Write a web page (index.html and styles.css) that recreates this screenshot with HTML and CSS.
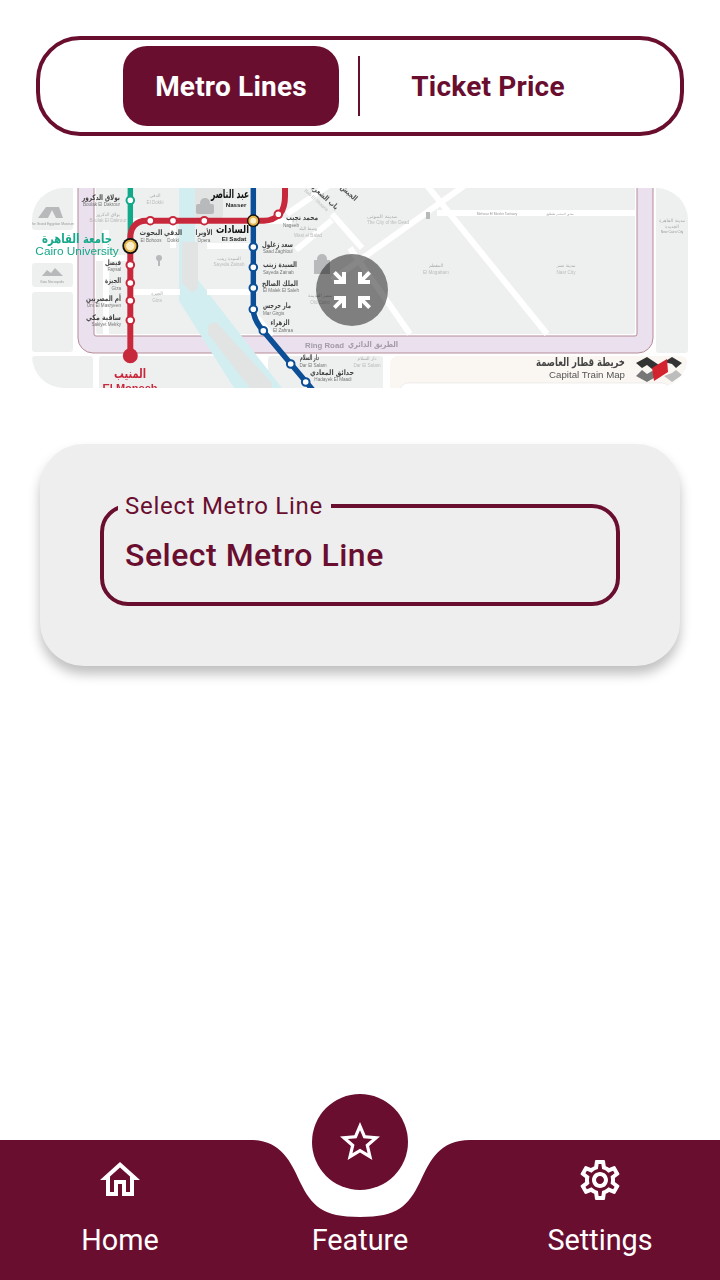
FILE: index.html
```html
<!DOCTYPE html>
<html lang="en">
<head>
<meta charset="utf-8">
<title>Metro Lines</title>
<link rel="stylesheet" href="styles.css">
</head>
<body>
<main class="screen">
  <div class="toggle">
    <div class="tab tab-active">Metro Lines</div>
    <div class="tab-divider"></div>
    <div class="tab tab-wide">Ticket Price</div>
  </div>

  <div class="map">
    <svg class="map-art" viewBox="0 0 656 200" width="656" height="200" xmlns="http://www.w3.org/2000/svg">
      <rect class="bg" width="656" height="200"/>
      <!-- outer blocks -->
      <g class="block">
        <rect x="0" y="-5" width="41" height="47" rx="3"/>
        <rect x="0" y="75" width="41" height="24" rx="3"/>
        <rect x="0" y="104" width="41" height="60" rx="3"/>
        <rect x="0" y="168" width="61" height="40" rx="3"/>
        <rect x="67" y="168" width="150" height="40" rx="3"/>
        <rect x="236" y="168" width="115" height="40" rx="3"/>
        <rect x="624" y="-5" width="32" height="170" rx="3"/>
      </g>
      <rect class="cream" x="358" y="168" width="298" height="40" rx="8"/>
      <rect class="cream-line" x="368" y="195" width="270" height="20" rx="8"/>
      <!-- ring road -->
      <path class="ring" d="M46 -10V150a15 15 0 0 0 15 15H606a15 15 0 0 0 15-15V-10Z"/>
      <rect class="ring-in" x="62" y="-10" width="543" height="158" rx="2"/>
      <rect class="inner" x="64" y="-10" width="539" height="156" rx="2"/>
      <!-- nile -->
      <polygon class="nile" points="147,-5 163,-5 163,88 250,200 202,200 147,113"/>
      <polygon class="island" points="150,54 166,54 166,100 160,105 150,95"/>
      <polygon class="island" points="176,137 184,134 240,195 240,205 222,205 176,146"/>
      <rect class="island" x="163" y="-5" width="28" height="38" rx="7"/>
      <!-- roads -->
      <g class="road">
        <path d="M98 -5V170"/>
        <path d="M100 33H260"/>
        <path d="M221 -5V125L240 148"/>
        <path d="M74 42V146"/>
        <path d="M64 70H96"/>
        <path d="M100 104H148"/>
        <path d="M175 104H222"/>
        <path d="M175 58H222"/>
        <path d="M141 33V60"/>
        <path d="M393 -5L515 146"/>
        <path d="M436 -5L300 92"/>
        <path d="M405 25H603"/>
        <path d="M318 60L378 146"/>
        <path d="M255 26L300 -5"/>
        <path d="M300 26L330 60"/>
        <path d="M264 62L300 32"/>
      </g>
      <!-- landmarks -->
      <polygon class="pyr" points="6,30 14,19 27,19 31,30 24,30 20,22 16,30"/>
      <polygon class="pyr" points="10,88 15,82 19,85 23,80 31,88"/>
      <g class="pyr">
        <rect x="164" y="16" width="18" height="10" rx="2"/>
        <circle cx="173" cy="15" r="5"/>
        <rect x="282" y="72" width="16" height="14"/>
        <circle cx="290" cy="71" r="5"/>
        <circle cx="127" cy="70" r="3"/>
        <rect x="126" y="72" width="2" height="6"/>
        <rect x="394" y="24" width="4" height="7"/>
      </g>
      <!-- lines -->
      <path class="line line-green" d="M98.3 -5V58"/>
      <path class="line line-blue" d="M221.3 -5V121C221.3 130 226 137 231.3 143L285 207"/>
      <path class="line line-red" d="M98.3 168V50C98.3 40 104 32.7 114 32.7H232C240 32.7 244 30 248 26C252 21 253 15 253 8V-5"/>
      <!-- stations -->
      <g class="st st-green"><circle cx="98.3" cy="12.3" r="3.8"/></g>
      <g class="st st-red">
        <circle cx="118.3" cy="32.7" r="3.8"/><circle cx="141" cy="32.7" r="3.8"/><circle cx="172.3" cy="32.7" r="3.8"/><circle cx="246.3" cy="26.3" r="3.8"/>
        <circle cx="98.3" cy="77" r="3.8"/><circle cx="98.3" cy="95" r="3.8"/><circle cx="98.3" cy="112.7" r="3.8"/><circle cx="98.3" cy="132.3" r="3.8"/>
      </g>
      <circle class="terminus" cx="98.3" cy="167.7" r="7.5"/>
      <g class="st st-blue">
        <circle cx="221.3" cy="59" r="3.8"/><circle cx="221.3" cy="79.3" r="3.8"/><circle cx="221.3" cy="100" r="3.8"/><circle cx="221.3" cy="121.3" r="3.8"/>
        <circle cx="231.3" cy="142.7" r="3.8"/><circle cx="258.7" cy="176" r="3.8"/><circle cx="273.7" cy="194" r="3.8"/>
      </g>
      <circle class="hub-o" cx="98.3" cy="58" r="8"/><circle class="hub-y" cx="98.3" cy="58" r="5.2"/>
      <circle class="hub-o" cx="221.3" cy="32.7" r="6.4"/><circle class="hub-y" cx="221.3" cy="32.7" r="4"/>

      <!-- labels -->
      <text class="ar end" x="88" y="12" textLength="38" lengthAdjust="spacingAndGlyphs">بولاق الدكرور</text><text class="en end" x="88" y="18">Boulak El Dakrour</text>
      <text class="ar-pale mid" x="123" y="9">الدقي</text><text class="en-pale mid" x="123" y="16">El Dokki</text>
      <text class="ar-pale mid" x="76" y="28" textLength="24" lengthAdjust="spacingAndGlyphs">بولاق الدكرور</text><text class="en-pale mid" x="76" y="34">Boulak El Dakrour</text>
      <text class="uni-ar mid" x="45" y="55" textLength="70" lengthAdjust="spacingAndGlyphs">جامعة القاهرة</text><text class="uni-en mid" x="45" y="67">Cairo University</text>
      <text class="ar mid" x="119" y="47" textLength="23" lengthAdjust="spacingAndGlyphs">البحوث</text><text class="en mid" x="119" y="54">El Bohoos</text>
      <text class="ar mid" x="141" y="47" textLength="18" lengthAdjust="spacingAndGlyphs">الدقي</text><text class="en mid" x="141" y="54">Dokki</text>
      <text class="ar mid" x="172" y="47" textLength="17" lengthAdjust="spacingAndGlyphs">الأوبرا</text><text class="en mid" x="172" y="54">Opera</text>
      <text class="hub-ar mid" x="200.5" y="45" textLength="33" lengthAdjust="spacingAndGlyphs">السادات</text><text class="hub-en mid" x="202" y="53">El Sadat</text>
      <text class="hub-ar big mid" x="198" y="10" textLength="38" lengthAdjust="spacingAndGlyphs">عبد الناصر</text><text class="hub-en mid" x="204" y="19">Nasser</text>
      <text class="ar end" x="286" y="32" textLength="32" lengthAdjust="spacingAndGlyphs">محمد نجيب</text><text class="en" x="251" y="39">Nageeb</text>
      <text class="ar-pale mid" x="276" y="42" textLength="18" lengthAdjust="spacingAndGlyphs">وسط البلد</text><text class="en-pale mid" x="276" y="49">Wast el Balad</text>
      <text class="ar end" x="261" y="59" textLength="31" lengthAdjust="spacingAndGlyphs">سعد زغلول</text><text class="en" x="231" y="65">Saad Zaghloul</text>
      <text class="ar end" x="265" y="79" textLength="34" lengthAdjust="spacingAndGlyphs">السيدة زينب</text><text class="en" x="231" y="86">Sayeda Zainab</text>
      <text class="ar end" x="266" y="98" textLength="36" lengthAdjust="spacingAndGlyphs">الملك الصالح</text><text class="en" x="231" y="104">El Malek El Saleh</text>
      <text class="ar end" x="259" y="120" textLength="28" lengthAdjust="spacingAndGlyphs">مار جرجس</text><text class="en" x="231" y="127">Mar Girgis</text>
      <text class="ar mid" x="248" y="137" textLength="19" lengthAdjust="spacingAndGlyphs">الزهراء</text><text class="en mid" x="251" y="144">El Zahraa</text>
      <text class="ar end" x="89" y="77" textLength="16" lengthAdjust="spacingAndGlyphs">فيصل</text><text class="en end" x="89" y="83">Faysal</text>
      <text class="ar end" x="89" y="95" textLength="16" lengthAdjust="spacingAndGlyphs">الجيزة</text><text class="en end" x="89" y="102">Giza</text>
      <text class="ar end" x="89" y="113" textLength="35" lengthAdjust="spacingAndGlyphs">أم المصريين</text><text class="en end" x="89" y="119">Om El Masryeen</text>
      <text class="ar end" x="89" y="132" textLength="35" lengthAdjust="spacingAndGlyphs">ساقية مكي</text><text class="en end" x="89" y="138">Sakiyet Mekky</text>
      <text class="red-ar mid" x="98" y="190" textLength="32" lengthAdjust="spacingAndGlyphs">المنيب</text><text class="red-en mid" x="98" y="204">El Moneeb</text>
      <text class="ring-en" x="273" y="160">Ring Road</text><text class="ring-ar end" x="366" y="159" textLength="50" lengthAdjust="spacingAndGlyphs">الطريق الدائري</text>
      <text class="ar end" x="287" y="172" textLength="19" lengthAdjust="spacingAndGlyphs">دار السلام</text><text class="en mid" x="281" y="179">Dar El Salam</text>
      <text class="ar end" x="322" y="187" textLength="44" lengthAdjust="spacingAndGlyphs">حدائق المعادي</text><text class="en mid" x="301" y="193">Hadayek El Maadi</text>
      <text class="ar-pale mid" x="335" y="172">دار السلام</text><text class="en-pale mid" x="335" y="179">Dar El Salam</text>
      <text class="tiny mid" x="20" y="37">The Grand Egyptian Museum</text>
      <text class="tiny mid" x="20" y="95">Giza Necropolis</text>
      <text class="ar-pale mid" x="125" y="107">الجيزة</text><text class="en-pale mid" x="125" y="114">Giza</text>
      <text class="ar-pale mid" x="197" y="72">السيدة زينب</text><text class="en-pale mid" x="197" y="78">Sayeda Zainab</text>
      <text class="ar-pale" x="335" y="30" textLength="30" lengthAdjust="spacingAndGlyphs">مدينة الموتى</text><text class="en-pale" x="335" y="36">The City of the Dead</text>
      <text class="ar-pale mid" x="288" y="109">مصر القديمة</text><text class="en-pale mid" x="288" y="116">Old Cairo</text>
      <text class="ar-pale mid" x="404" y="79">المقطم</text><text class="en-pale mid" x="404" y="86">El Mogattam</text>
      <text class="ar-pale mid" x="534" y="79">مدينة نصر</text><text class="en-pale mid" x="534" y="86">Nasr City</text>
      <text class="ar-pale mid" x="640" y="34" textLength="26" lengthAdjust="spacingAndGlyphs">مدينة القاهرة</text><text class="ar-pale mid" x="640" y="40">الجديدة</text><text class="tiny mid" x="640" y="45">New Cairo City</text>
      <text class="tiny mid" x="465" y="27">Mehwar El Moshir Tantawy</text><text class="tiny mid" x="528" y="27">محور المشير طنطاوي</text>
      <text class="dark-ar" transform="translate(277 -2) rotate(42)" textLength="36" lengthAdjust="spacingAndGlyphs">باب الشعرية</text>
      <text class="dark-ar" transform="translate(308 0) rotate(42)" textLength="20" lengthAdjust="spacingAndGlyphs">الجيش</text>
      <text class="en-pale" transform="translate(272 3) rotate(42)">Bab El Shaaria</text>
      <text class="title-ar end" x="593" y="178" textLength="89" lengthAdjust="spacingAndGlyphs">خريطة قطار العاصمة</text>
      <text class="title-en end" x="593" y="190">Capital Train Map</text>
      <!-- logo -->
      <polygon class="lg-d" points="604,175 615,169 627,177 620,181 615,177 610,180"/>
      <polygon class="lg-g" points="604,188 610,182 615,186 620,183 627,187 615,194"/>
      <polygon class="lg-d" points="632,174 640,169 650,175 644,180 640,176"/>
      <polygon class="lg-l" points="632,188 640,185 644,182 650,187 640,194"/>
      <polygon class="lg-r" points="620,180 635,171 636,184 622,193"/>
    </svg>
    <button class="collapse" type="button" aria-label="Collapse map">
      <svg viewBox="0 0 24 24" width="48" height="48"><path d="M9 9V3H7v2.59L3.91 2.5 2.5 3.91 5.59 7H3v2h6zm12 0V7h-2.59l3.09-3.09-1.41-1.41L17 5.59V3h-2v6h6zM3 15v2h2.59L2.5 20.09l1.41 1.41L7 18.41V21h2v-6H3zm12 0v6h2v-2.59l3.09 3.09 1.41-1.41L18.41 17H21v-2h-6z"/></svg>
    </button>
  </div>

  <section class="card">
    <fieldset class="field">
      <legend class="field-label">Select Metro Line</legend>
      <div class="field-value">Select Metro Line</div>
    </fieldset>
  </section>

  <nav class="nav">
    <svg class="nav-bg" viewBox="0 0 720 140" width="720" height="140"><path d="M0 0H250C280 0 290 20 300 42C312 66 322 77 360 77C398 77 408 66 420 42C430 20 440 0 470 0H720V140H0Z"/></svg>
    <span class="nav-fab"><svg viewBox="0 0 24 24" width="48" height="48"><path d="M22 9.24l-7.19-.62L12 2 9.19 8.63 2 9.24l5.46 4.73L5.82 21 12 17.27 18.18 21l-1.63-7.03L22 9.24zM12 15.4l-3.76 2.27 1-4.28-3.32-2.88 4.38-.38L12 6.1l1.71 4.04 4.38.38-3.32 2.88 1 4.28L12 15.4z"/></svg></span>
    <div class="nav-item">
      <svg class="nav-icon" viewBox="0 0 24 24" width="48" height="48"><path d="M12 5.69l5 4.5V18h-2v-6H9v6H7v-7.81l5-4.5M12 3L2 12h3v8h6v-6h2v6h6v-8h3L12 3z"/></svg>
      <span class="nav-label">Home</span>
    </div>
    <div class="nav-item">
      <span class="nav-icon"></span>
      <span class="nav-label">Feature</span>
    </div>
    <div class="nav-item">
      <svg class="nav-icon" viewBox="0 0 24 24" width="48" height="48"><path d="M19.43 12.98c.04-.32.07-.64.07-.98 0-.34-.03-.66-.07-.98l2.11-1.65c.19-.15.24-.42.12-.64l-2-3.46c-.09-.16-.26-.25-.44-.25-.06 0-.12.01-.17.03l-2.49 1c-.52-.4-1.08-.73-1.69-.98l-.38-2.65C14.46 2.18 14.25 2 14 2h-4c-.25 0-.46.18-.49.42l-.38 2.65c-.61.25-1.17.59-1.69.98l-2.49-1c-.06-.02-.12-.03-.18-.03-.17 0-.34.09-.43.25l-2 3.46c-.13.22-.07.49.12.64l2.11 1.65c-.04.32-.07.65-.07.98 0 .33.03.66.07.98l-2.11 1.65c-.19.15-.24.42-.12.64l2 3.46c.09.16.26.25.44.25.06 0 .12-.01.17-.03l2.49-1c.52.4 1.08.73 1.69.98l.38 2.65c.03.24.24.42.49.42h4c.25 0 .46-.18.49-.42l.38-2.65c.61-.25 1.17-.59 1.69-.98l2.49 1c.06.02.12.03.18.03.17 0 .34-.09.43-.25l2-3.46c.12-.22.07-.49-.12-.64l-2.11-1.65zm-1.98-1.71c.04.31.05.52.05.73 0 .21-.02.43-.05.73l-.14 1.13.89.7 1.08.84-.7 1.21-1.27-.51-1.04-.42-.9.68c-.43.32-.84.56-1.25.73l-1.06.43-.16 1.13-.2 1.35h-1.4l-.19-1.35-.16-1.13-1.06-.43c-.43-.18-.83-.41-1.23-.71l-.91-.7-1.06.43-1.27.51-.7-1.21 1.08-.84.89-.7-.14-1.13c-.03-.31-.05-.54-.05-.74s.02-.43.05-.73l.14-1.13-.89-.7-1.08-.84.7-1.21 1.27.51 1.04.42.9-.68c.43-.32.84-.56 1.25-.73l1.06-.43.16-1.13.2-1.35h1.39l.19 1.35.16 1.13 1.06.43c.43.18.83.41 1.23.71l.91.7 1.06-.43 1.27-.51.7 1.21-1.07.85-.89.7.14 1.13zM12 8c-2.21 0-4 1.79-4 4s1.79 4 4 4 4-1.79 4-4-1.79-4-4-4zm0 6c-1.1 0-2-.9-2-2s.9-2 2-2 2 .9 2 2-.9 2-2 2z"/></svg>
      <span class="nav-label">Settings</span>
    </div>
  </nav>
</main>
</body>
</html>
```

FILE: styles.css
```css
* { box-sizing: border-box; }
html, body { margin: 0; padding: 0; background: #fff; }
body { font-family: Roboto, "Liberation Sans", sans-serif; color: #6a0e30; }

.screen {
  width: 720px;
  height: 1280px;
  display: flex;
  flex-direction: column;
  overflow: hidden;
}

/* toggle */
.toggle {
  margin: 36px 36px 0;
  height: 100px;
  border: 4px solid #6a0e30;
  border-radius: 44px;
  display: flex;
  align-items: center;
  justify-content: center;
}
.tab {
  width: 216px;
  height: 80px;
  border-radius: 24px;
  display: flex;
  align-items: center;
  justify-content: center;
  font-size: 28px;
  font-weight: 700;
  letter-spacing: 0.2px;
  color: #6a0e30;
}
.tab-wide { width: 218px; }
.tab-active { background: #6a0e30; color: #fff; }
.tab-divider { width: 2px; height: 60px; margin: 0 19px; background: #6a0e30; }

/* map */
.map {
  position: relative;
  margin: 52px 32px 0;
  height: 200px;
  border-radius: 32px;
  overflow: hidden;
}
.map-art { display: block; filter: blur(0.35px); }
.collapse {
  position: absolute;
  left: 284px;
  top: 66px;
  width: 72px;
  height: 72px;
  padding: 12px;
  border: 0;
  border-radius: 50%;
  background: rgba(0, 0, 0, 0.47);
}
.collapse svg { display: block; fill: #fff; }

.bg { fill: #fff; }
.block { fill: #eef0ef; }
.cream { fill: #faf6f2; }
.cream-line { fill: #fff; stroke: #e8e4e2; stroke-width: 0.6; }
.ring { fill: #ebe0ee; stroke: #b58b96; stroke-width: 1; }
.ring-in { fill: #fff; stroke: #b58b96; stroke-width: 1; }
.inner { fill: #eef0ef; }
.nile { fill: #d3eef0; }
.island { fill: #e2e3e3; }
.road { fill: none; stroke: #fff; stroke-width: 6; }
.pyr { fill: #b7b9ba; }
.line { fill: none; stroke-width: 5.5; }
.line-green { stroke: #12a88a; }
.line-blue { stroke: #0c4f96; }
.line-red { stroke: #c8283c; stroke-width: 6; }
.st { fill: #fff; stroke-width: 2; }
.st-green { stroke: #12a88a; }
.st-red { stroke: #c8283c; }
.st-blue { stroke: #0c4f96; }
.terminus { fill: #c8283c; }
.hub-o { fill: #111; }
.hub-y { fill: #fbeec8; stroke: #e6b64c; stroke-width: 2; }

.map text { font-family: "DejaVu Sans", "Liberation Sans", sans-serif; }
.map .mid { text-anchor: middle; }
.map .end { text-anchor: end; }
.map .ar { font-size: 7.5px; font-weight: 700; fill: #444; }
.map .en { font-family: "Liberation Sans", sans-serif; font-size: 4.6px; fill: #777; }
.map .ar-pale { font-size: 4.5px; fill: #aaa; }
.map .en-pale { font-family: "Liberation Sans", sans-serif; font-size: 4.6px; fill: #bbb; }
.map .tiny { font-family: "Liberation Sans", sans-serif; font-size: 3.4px; fill: #999; }
.map .uni-ar { font-size: 12.5px; font-weight: 700; fill: #16a88a; }
.map .uni-en { font-family: "Liberation Sans", sans-serif; font-size: 11.8px; fill: #16a88a; }
.map .hub-ar { font-size: 11px; font-weight: 700; fill: #111; }
.map .hub-ar.big { font-size: 12px; }
.map .hub-en { font-family: "Liberation Sans", sans-serif; font-size: 6.2px; font-weight: 700; fill: #222; }
.map .red-ar { font-size: 13px; font-weight: 700; fill: #c8283c; }
.map .red-en { font-family: "Liberation Sans", sans-serif; font-size: 11px; font-weight: 700; fill: #c8283c; }
.map .ring-en { font-family: "Liberation Sans", sans-serif; font-size: 7.8px; font-weight: 700; fill: #a39ba7; }
.map .ring-ar { font-size: 8px; font-weight: 700; fill: #a39ba7; }
.map .dark-ar { font-size: 7.5px; font-weight: 700; fill: #555; }
.map .title-ar { font-size: 11.5px; font-weight: 700; fill: #444; }
.map .title-en { font-family: "Liberation Sans", sans-serif; font-size: 9.7px; fill: #555; }
.lg-d { fill: #333; }
.lg-g { fill: #777; }
.lg-l { fill: #bdbdbd; }
.lg-r { fill: #d2232f; }

/* card */
.card {
  margin: 56px 40px 0;
  padding: 48px 60px 60px;
  background: #eeeeee;
  border-radius: 44px;
  box-shadow: 0 8px 12px rgba(0, 0, 0, 0.25);
}
.field {
  margin: 0;
  padding: 17px 21px 29px;
  min-width: 0;
  border: 4px solid #6a0e30;
  border-radius: 28px;
}
.field-label {
  margin-left: -7px;
  padding: 0 8px 0 7px;
  font-size: 24px;
  line-height: 28px;
  letter-spacing: 0.72px;
}
.field-value {
  font-size: 32px;
  font-weight: 500;
  line-height: 36px;
  letter-spacing: 0.5px;
}

/* nav */
.nav {
  position: relative;
  margin-top: auto;
  height: 140px;
  display: grid;
  grid-template-columns: repeat(3, 240px);
  color: #fff;
}
.nav-bg { position: absolute; left: 0; top: 0; fill: #6a0e30; }
.nav-fab {
  position: absolute;
  left: 312px;
  top: -46px;
  width: 96px;
  height: 96px;
  padding: 24px;
  border-radius: 50%;
  background: #6a0e30;
}
.nav-fab svg { display: block; fill: #fff; }
.nav-item {
  position: relative;
  display: flex;
  flex-direction: column;
  align-items: center;
  gap: 20px;
  padding-top: 16px;
}
.nav-icon { display: block; width: 48px; height: 48px; fill: #fff; }
.nav-label { font-size: 28.8px; line-height: 32px; }
```
